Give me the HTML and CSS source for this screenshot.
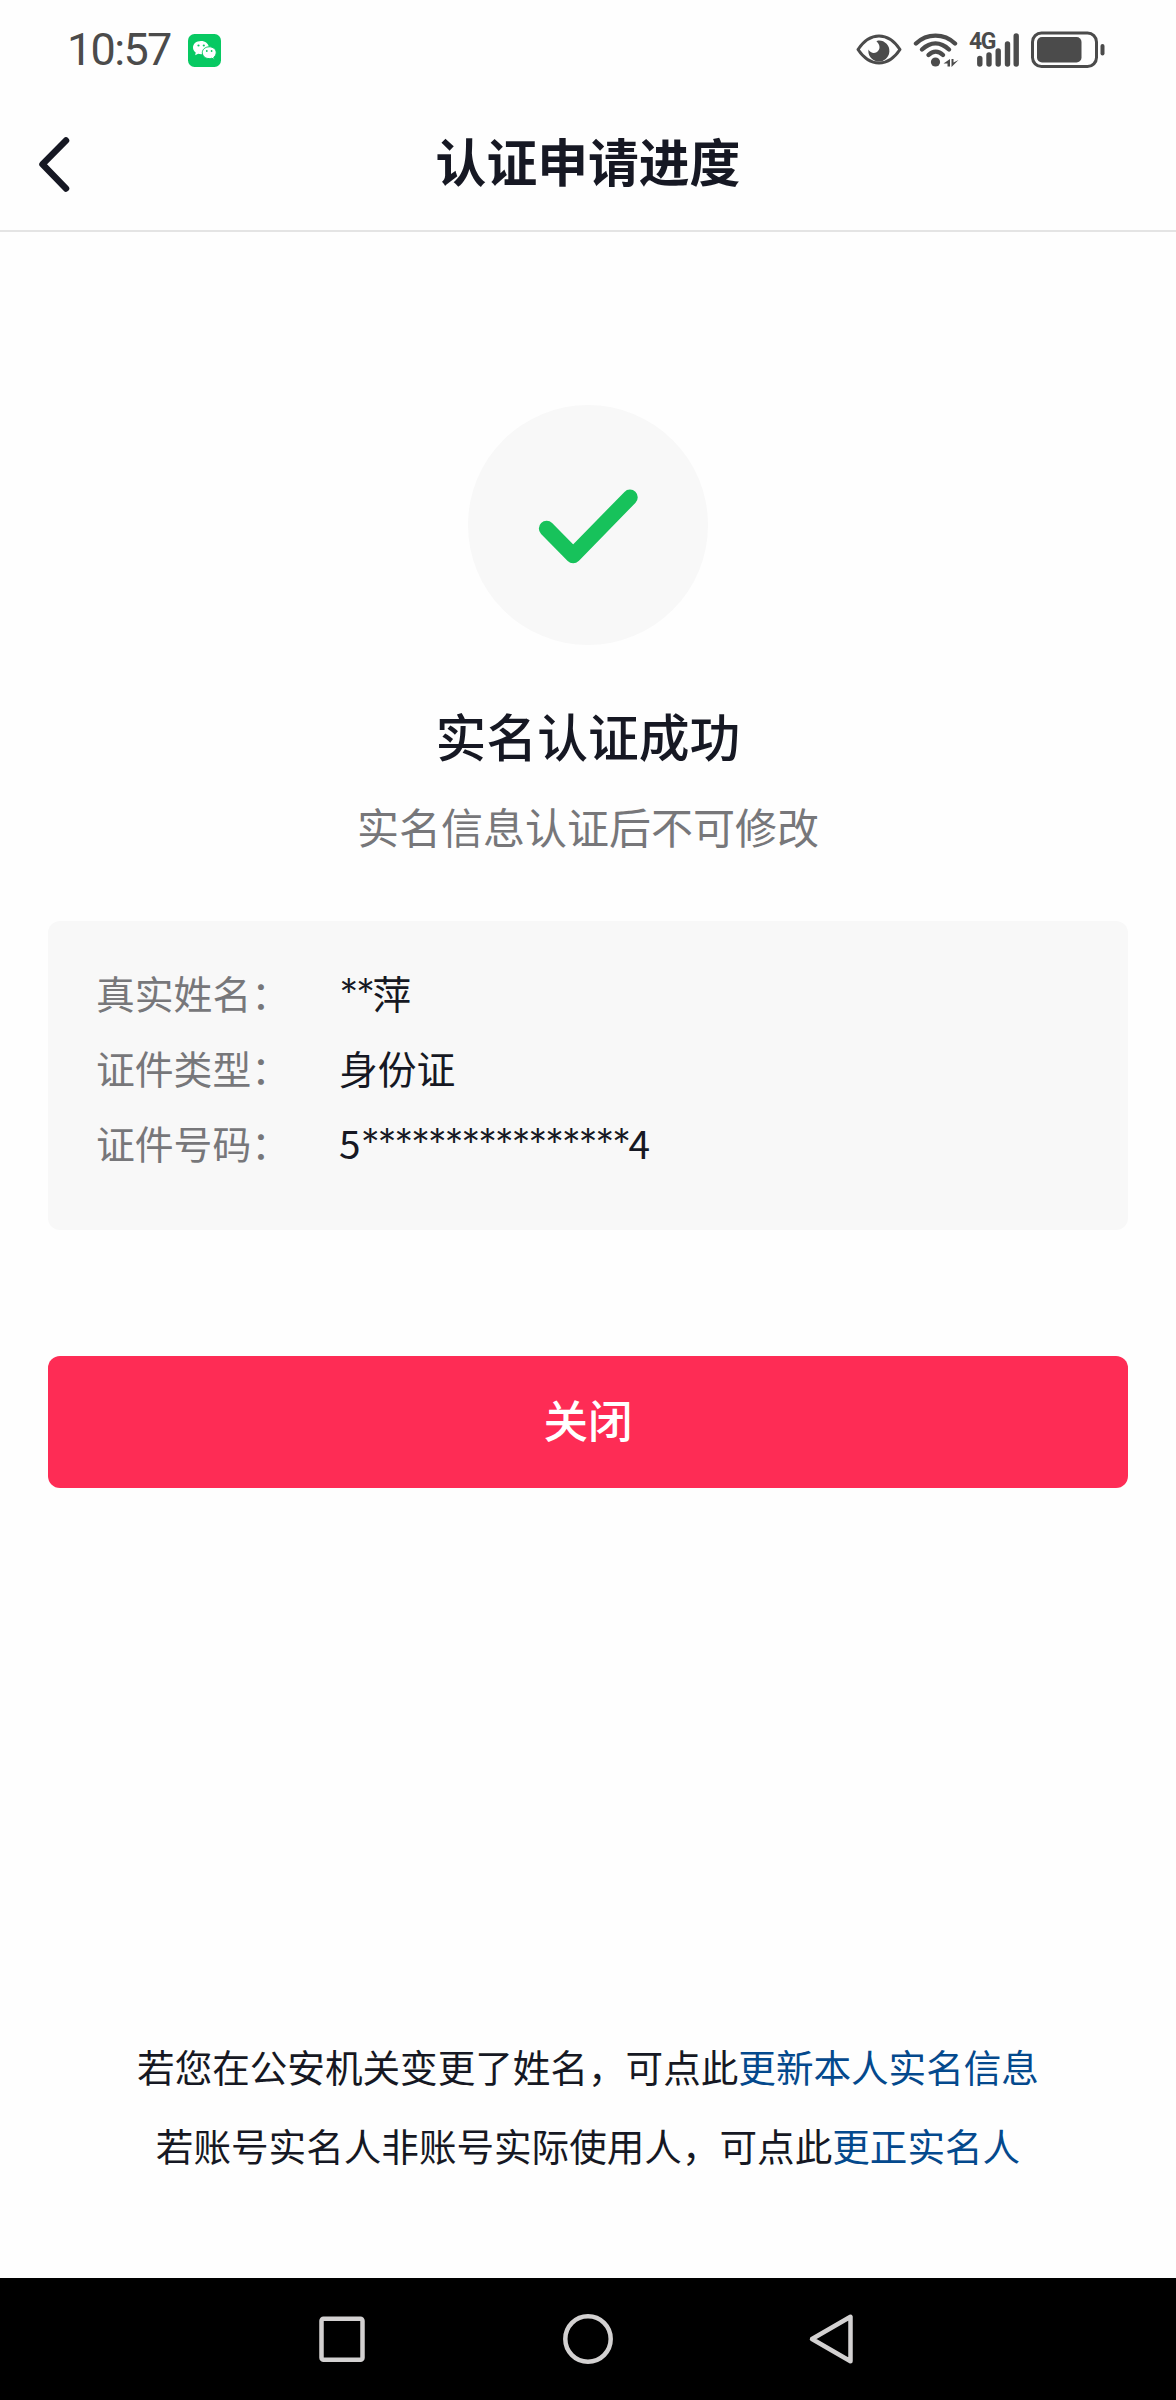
FILE: index.html
```html
<!DOCTYPE html>
<html lang="zh-CN">
<head>
    <meta charset="UTF-8">
    <meta name="viewport" content="width=device-width, initial-scale=1.0">
    <title>认证申请进度</title>
    <link rel="stylesheet" href="styles.css">
</head>
<body>
    <div class="screen">
        <div class="status-bar">
            <span class="time">10:57</span>
            <svg class="wechat" width="33" height="33" viewBox="0 0 33 33">
                <rect width="33" height="33" rx="6.5" fill="#07c962"/>
                <path d="M13 7c-4.700 0-8 2.800-8 6.500 0 2 1 3.800 2.700 5l-.5 2.700 3-1.500c3 .9 6 .4 8.200-1.200 2-1.400 2.900-3.200 2.600-5.200C20.500 9.600 17.300 7 13 7z" fill="#fff"/>
                <path d="M21.300 12.800c-3.900 0-7 2.500-7 5.900s3.100 5.900 7 5.900c.9 0 1.800-.1 2.600-.4l2.500 1.300-.6-2.300c1.500-1.100 2.400-2.700 2.400-4.500 0-3.400-3-5.900-6.900-5.900z" fill="#fff" stroke="#07c962" stroke-width="1"/>
                <g fill="#07c962">
                    <circle cx="10.500" cy="11.500" r="1.100"/>
                    <circle cx="15.800" cy="11.500" r="1.100"/>
                    <circle cx="18.800" cy="17" r=".9"/>
                    <circle cx="23.600" cy="17" r=".9"/>
                </g>
            </svg>
            <div class="status-icons">
                <svg class="eye" width="46" height="36" viewBox="0 0 46 36">
                    <path d="M2 17.500C8 8.500 15 4 23 4S38 8.500 44 17.500c-6 9-13 13.500-21 13.500S8 26.500 2 17.500z" fill="none" stroke="#4b4b4b" stroke-width="3" stroke-linejoin="round"/>
                    <path d="M23 8.500A10.500 10.500 0 1 1 12.500 17.500C14 20.500 17.500 22 20.500 20.300C24.500 18 24.500 12.500 20.500 9.500C21 8.800 22 8.500 23 8.500z" fill="#4b4b4b"/>
                </svg>
                <svg class="wifi" width="46" height="36" viewBox="0 0 46 36">
                    <g fill="none" stroke="#4b4b4b" stroke-width="4.400" stroke-linecap="round">
                        <path d="M3 11.500C14 1 31 1 42 11.500"/>
                        <path d="M9 17.500C17.500 9.500 27.500 9.500 36 17.500"/>
                        <path d="M15.500 23C20 18.500 25.500 18.500 30 23"/>
                    </g>
                    <circle cx="22.500" cy="30" r="4.600" fill="#4b4b4b"/>
                    <path d="M30.500 31.500L37 27v7.500h-2.500v-3zM38.500 27h2v3.500l5-2.500-7 7z" fill="#4b4b4b"/>
                </svg>
                <div class="signal">
                    <span class="network">4G</span>
                    <svg width="42" height="36" viewBox="0 0 42 36">
                        <g stroke="#4b4b4b" stroke-width="5.400" stroke-linecap="round">
                            <path d="M2.800 26.500v5.500"/>
                            <path d="M12 23v9"/>
                            <path d="M21.200 19v13"/>
                            <path d="M30.500 12v20"/>
                            <path d="M39.200 4v28"/>
                        </g>
                    </svg>
                </div>
                <svg class="battery" width="74" height="38" viewBox="0 0 74 38">
                    <rect x="1.500" y="2" width="64" height="33.500" rx="9" fill="none" stroke="#4b4b4b" stroke-width="3"/>
                    <rect x="6" y="6" width="44.500" height="25.500" rx="5" fill="#4b4b4b"/>
                    <rect x="69.500" y="13" width="4" height="11.500" rx="2" fill="#4b4b4b"/>
                </svg>
            </div>
        </div>

        <header class="header">
            <svg class="back" width="40" height="64" viewBox="0 0 40 64">
                <path d="M32 9.500L8.500 33.300l23.500 24.200" fill="none" stroke="#161823" stroke-width="6.500" stroke-linecap="round" stroke-linejoin="round"/>
            </svg>
            <h1>认证申请进度</h1>
        </header>

        <main class="content">
            <div class="result-icon">
                <svg width="120" height="120" viewBox="0 0 120 120">
                    <path d="M18.600 63.500l26.600 27L102 32.300" fill="none" stroke="#17c25b" stroke-width="15.500" stroke-linecap="round" stroke-linejoin="round"/>
                </svg>
            </div>
            <h2>实名认证成功</h2>
            <p class="subtitle">实名信息认证后不可修改</p>

            <div class="info-card">
                <div class="info-row">
                    <span class="label">真实姓名：</span>
                    <span class="value"><span class="mask">**</span>萍</span>
                </div>
                <div class="info-row">
                    <span class="label">证件类型：</span>
                    <span class="value">身份证</span>
                </div>
                <div class="info-row">
                    <span class="label">证件号码：</span>
                    <span class="value">5<span class="mask">****************</span>4</span>
                </div>
            </div>

            <button class="close-btn">关闭</button>
        </main>

        <footer class="tips">
            <p>若您在公安机关变更了姓名，可点此<a href="#">更新本人实名信息</a></p>
            <p>若账号实名人非账号实际使用人，可点此<a href="#">更正实名人</a></p>
        </footer>

        <nav class="nav-bar">
            <svg width="54" height="54" viewBox="0 0 54 54">
                <rect x="6.500" y="6.700" width="41" height="41" rx="2" />
            </svg>
            <svg width="54" height="54" viewBox="0 0 54 54">
                <circle cx="27" cy="27" r="22.700" />
            </svg>
            <svg width="54" height="54" viewBox="0 0 54 54">
                <path d="M43.500 4.800v44.400L5 27z" />
            </svg>
        </nav>
    </div>
</body>
</html>
```
FILE: styles.css
```css
* {
    margin: 0;
    padding: 0;
    box-sizing: border-box;
}

body {
    font-family: "Noto Sans CJK SC", sans-serif;
    background: #fefefe;
    color: #161823;
}

.screen {
    display: flex;
    flex-direction: column;
    height: 2400px;
    overflow: hidden;
}

/* Status bar */
.status-bar {
    display: flex;
    align-items: center;
    height: 100px;
    padding: 0 71px 0 67px;
    color: #4b4b4b;
}

.time {
    width: 121px;
    font-family: Roboto, sans-serif;
    font-size: 45px;
    line-height: 60px;
    font-weight: 400;
    letter-spacing: -1.7px;
    white-space: nowrap;
}

.status-icons {
    display: flex;
    align-items: center;
    margin-left: auto;
}

.wifi {
    margin-left: 11px;
}

.signal {
    display: flex;
    position: relative;
    width: 50px;
    margin-left: 10px;
    justify-content: flex-end;
}

.network {
    position: absolute;
    left: 0;
    top: 0;
    font-family: Roboto, sans-serif;
    font-size: 23px;
    line-height: 20px;
    font-weight: 700;
    letter-spacing: -1.5px;
}

.battery {
    margin-left: 12px;
}

/* Title bar */
.header {
    display: grid;
    grid-template-columns: 40px 1fr 40px;
    align-items: center;
    height: 132px;
    padding: 0 34px 4px;
    border-bottom: 2px solid #e4e4e4;
}

.header h1 {
    font-size: 50.8px;
    line-height: 72px;
    font-weight: 700;
    text-align: center;
    margin-bottom: 7px;
}

/* Result */
.content {
    display: flex;
    flex-direction: column;
    align-items: center;
    padding: 173px 48px 0;
}

.result-icon {
    display: flex;
    align-items: center;
    justify-content: center;
    width: 240px;
    height: 240px;
    border-radius: 50%;
    background: #f8f8f8;
}

h2 {
    margin-top: 55px;
    font-size: 50.8px;
    line-height: 70px;
    font-weight: 500;
}

.subtitle {
    margin-top: 26px;
    font-size: 42px;
    line-height: 60px;
    color: #77777a;
}

.info-card {
    width: 100%;
    height: 309px;
    margin-top: 65px;
    padding: 34px 48px;
    border-radius: 12px;
    background: #f8f8f8;
}

.info-row {
    display: flex;
    height: 75px;
    font-size: 38.8px;
    line-height: 75px;
}

.label {
    width: 243px;
    color: #77777a;
}

.mask {
    font-family: Lato, sans-serif;
    font-size: 46px;
    line-height: 1;
    letter-spacing: -2.8px;
    vertical-align: -4px;
}

.close-btn {
    width: 100%;
    height: 132px;
    margin-top: 126px;
    padding-bottom: 7px;
    border: none;
    border-radius: 12px;
    background: #fe2c55;
    color: #fff;
    font-family: inherit;
    font-size: 44.5px;
    font-weight: 500;
}

/* Help links */
.tips {
    margin-top: auto;
    margin-bottom: 94px;
    text-align: center;
    font-size: 37.6px;
    line-height: 79px;
}

.tips a {
    color: #04498d;
    text-decoration: none;
}

/* System navigation */
.nav-bar {
    display: flex;
    align-items: center;
    justify-content: center;
    gap: 192px;
    height: 122px;
    background: #000;
}

.nav-bar svg {
    fill: none;
    stroke: #d3d1d1;
    stroke-width: 4.5;
    stroke-linejoin: round;
}
```
